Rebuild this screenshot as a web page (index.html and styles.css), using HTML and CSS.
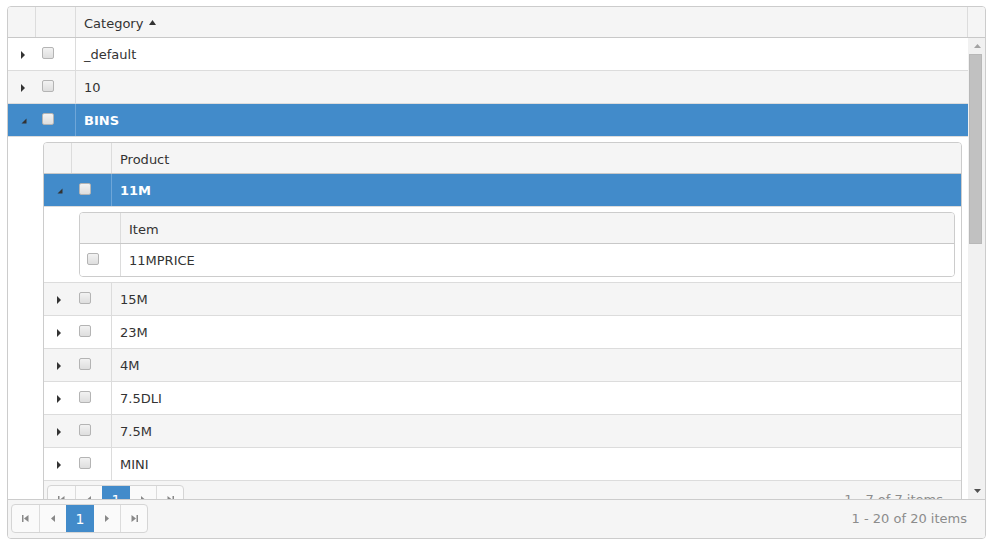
FILE: index.html
```html
<!DOCTYPE html>
<html>
<head>
<meta charset="utf-8">
<link rel="stylesheet" href="styles.css">
</head>
<body>
<div class="grid">
  <div class="ghead">
    <div class="hh"></div>
    <div class="hcb"></div>
    <div class="ht bordered">Category <svg class="sort" width="7" height="5" viewBox="0 0 7 5"><path d="M0 5L3.5 0L7 5Z" fill="#333"/></svg></div>
    <div class="sbh"></div>
  </div>
  <div class="gbody">
    <div class="rows">
      <div class="row">
        <div class="hc"><svg width="5" height="8" viewBox="0 0 5 8"><path d="M0 0L4 4L0 8Z" fill="#333"/></svg></div>
        <div class="cc"><span class="cb"></span></div>
        <div class="tc">_default</div>
      </div>
      <div class="row alt">
        <div class="hc"><svg width="5" height="8" viewBox="0 0 5 8"><path d="M0 0L4 4L0 8Z" fill="#333"/></svg></div>
        <div class="cc"><span class="cb"></span></div>
        <div class="tc">10</div>
      </div>
      <div class="row sel">
        <div class="hc"><svg width="6" height="6" viewBox="0 0 6 6"><path d="M5.5 0.5V5.5H0.5Z" fill="#333"/></svg></div>
        <div class="cc"><span class="cb"></span></div>
        <div class="tc">BINS</div>
      </div>
      <div class="detail">
        <div class="dh"></div>
        <div class="dc">
          <div class="sub">
            <div class="ghead">
              <div class="hh"></div>
              <div class="hcb"></div>
              <div class="ht">Product</div>
            </div>
            <div class="row sel">
              <div class="hc"><svg width="6" height="6" viewBox="0 0 6 6"><path d="M5.5 0.5V5.5H0.5Z" fill="#333"/></svg></div>
              <div class="cc n"><span class="cb"></span></div>
              <div class="tc">11M</div>
            </div>
            <div class="detail">
              <div class="dh"></div>
              <div class="dc">
                <div class="sub">
                  <div class="ghead">
                    <div class="hcb wide"></div>
                    <div class="ht">Item</div>
                  </div>
                  <div class="row last">
                    <div class="cc n wide"><span class="cb"></span></div>
                    <div class="tc">11MPRICE</div>
                  </div>
                </div>
              </div>
            </div>
            <div class="row alt">
              <div class="hc"><svg width="5" height="8" viewBox="0 0 5 8"><path d="M0 0L4 4L0 8Z" fill="#333"/></svg></div>
              <div class="cc n"><span class="cb"></span></div>
              <div class="tc">15M</div>
            </div>
            <div class="row">
              <div class="hc"><svg width="5" height="8" viewBox="0 0 5 8"><path d="M0 0L4 4L0 8Z" fill="#333"/></svg></div>
              <div class="cc n"><span class="cb"></span></div>
              <div class="tc">23M</div>
            </div>
            <div class="row alt">
              <div class="hc"><svg width="5" height="8" viewBox="0 0 5 8"><path d="M0 0L4 4L0 8Z" fill="#333"/></svg></div>
              <div class="cc n"><span class="cb"></span></div>
              <div class="tc">4M</div>
            </div>
            <div class="row">
              <div class="hc"><svg width="5" height="8" viewBox="0 0 5 8"><path d="M0 0L4 4L0 8Z" fill="#333"/></svg></div>
              <div class="cc n"><span class="cb"></span></div>
              <div class="tc">7.5DLI</div>
            </div>
            <div class="row alt">
              <div class="hc"><svg width="5" height="8" viewBox="0 0 5 8"><path d="M0 0L4 4L0 8Z" fill="#333"/></svg></div>
              <div class="cc n"><span class="cb"></span></div>
              <div class="tc">7.5M</div>
            </div>
            <div class="row">
              <div class="hc"><svg width="5" height="8" viewBox="0 0 5 8"><path d="M0 0L4 4L0 8Z" fill="#333"/></svg></div>
              <div class="cc n"><span class="cb"></span></div>
              <div class="tc">MINI</div>
            </div>
            <div class="pager">
              <div class="pbtns">
                <span class="pb"><svg width="7" height="7" viewBox="0 0 7 7"><rect x="0" y="0" width="1.5" height="7" fill="#888"/><path d="M6.5 0V7L2 3.5Z" fill="#888"/></svg></span>
                <span class="pb"><svg width="4" height="7" viewBox="0 0 4 7"><path d="M4 0V7L0 3.5Z" fill="#888"/></svg></span>
                <span class="pb cur">1</span>
                <span class="pb"><svg width="4" height="7" viewBox="0 0 4 7"><path d="M0 0V7L4 3.5Z" fill="#888"/></svg></span>
                <span class="pb"><svg width="7" height="7" viewBox="0 0 7 7"><path d="M0.5 0V7L5 3.5Z" fill="#888"/><rect x="5.5" y="0" width="1.5" height="7" fill="#888"/></svg></span>
              </div>
              <div class="pinfo">1 - 7 of 7 items</div>
            </div>
          </div>
        </div>
      </div>
    </div>
    <div class="sb">
      <div class="sbarrow"><svg width="7" height="4" viewBox="0 0 7 4"><path d="M0 4L3.5 0L7 4Z" fill="#a3a3a3"/></svg></div>
      <div class="thumb"></div>
      <div class="sbspace"></div>
      <div class="sbarrow"><svg width="7" height="4" viewBox="0 0 7 4"><path d="M0 0L3.5 4L7 0Z" fill="#505050"/></svg></div>
    </div>
  </div>
  <div class="pager outer">
    <div class="pbtns">
      <span class="pb"><svg width="7" height="7" viewBox="0 0 7 7"><rect x="0" y="0" width="1.5" height="7" fill="#888"/><path d="M6.5 0V7L2 3.5Z" fill="#888"/></svg></span>
      <span class="pb"><svg width="4" height="7" viewBox="0 0 4 7"><path d="M4 0V7L0 3.5Z" fill="#888"/></svg></span>
      <span class="pb cur">1</span>
      <span class="pb"><svg width="4" height="7" viewBox="0 0 4 7"><path d="M0 0V7L4 3.5Z" fill="#888"/></svg></span>
      <span class="pb"><svg width="7" height="7" viewBox="0 0 7 7"><path d="M0.5 0V7L5 3.5Z" fill="#888"/><rect x="5.5" y="0" width="1.5" height="7" fill="#888"/></svg></span>
    </div>
    <div class="pinfo">1 - 20 of 20 items</div>
  </div>
</div>
</body>
</html>
```

FILE: styles.css
```css
* { box-sizing: border-box; }
body {
  margin: 0;
  font-family: "DejaVu Sans", "Open Sans", sans-serif;
  font-size: 13px;
  color: #333;
  background: #fff;
}
.grid {
  margin: 6px 0 0 7px;
  width: 979px;
  height: 533px;
  border: 1px solid #ccc;
  border-radius: 4px;
  display: flex;
  flex-direction: column;
  overflow: hidden;
}
.ghead {
  display: flex;
  flex: none;
  height: 31px;
  background: #f5f5f5;
  border-bottom: 1px solid #c8c8c8;
}
.ghead .hh { width: 28px; flex: none; border-right: 1px solid #dcdcdc; }
.ghead .hcb { width: 40px; flex: none; border-right: 1px solid #dcdcdc; }
.ghead .hcb.wide { width: 41px; }
.ghead .ht {
  flex: 1;
  display: flex;
  align-items: center;
  padding: 3px 0 0 8px;
}
.ghead .ht.bordered { border-right: 1px solid #dcdcdc; }
.ghead .sbh { width: 17px; flex: none; }
.sort { margin-left: 6px; margin-top: -2px; }

.gbody { display: flex; flex: 1; min-height: 0; }
.rows { flex: 1; overflow: hidden; }

.row {
  display: flex;
  height: 33px;
  border-bottom: 1px solid #dcdcdc;
  background: #fff;
}
.row.alt { background: #f5f5f5; }
.row.last { border-bottom: 0; height: 32px; }
.row.sel { background: #428bca; color: #fff; font-weight: bold; }
.row .hc {
  width: 28px;
  flex: none;
  display: flex;
  align-items: center;
  padding: 1px 0 0 13px;
}
.row .cc {
  width: 40px;
  flex: none;
  padding: 9px 0 0 6px;
  border-right: 1px solid #dcdcdc;
}
.row .cc.n { padding-left: 7px; }
.row .cc.wide { width: 41px; }
.row.sel .cc { border-right-color: #6ea6d8; }
.row .tc {
  flex: 1;
  display: flex;
  align-items: center;
  padding-left: 8px;
}
.cb {
  display: block;
  width: 12px;
  height: 12px;
  border: 1px solid #b4b4b4;
  border-radius: 2px;
  background: linear-gradient(#f2f2f2, #dedede);
}

.detail {
  display: flex;
  border-bottom: 1px solid #dcdcdc;
  background: #fff;
}
.detail .dh { width: 28px; flex: none; }
.detail .dc { flex: 1; padding: 5px 6px 5px 7px; }
.sub {
  border: 1px solid #ccc;
  border-radius: 4px;
  overflow: hidden;
  display: flex;
  flex-direction: column;
}

.sb {
  width: 17px;
  flex: none;
  background: #f1f1f1;
  display: flex;
  flex-direction: column;
}
.sbarrow {
  height: 16px;
  display: flex;
  align-items: center;
  justify-content: center;
  padding-left: 1px;
}
.thumb {
  height: 190px;
  width: 13px;
  margin-left: 1px;
  background: #c1c1c1;
  border: 1px solid #b8b8b8;
}
.sbspace { flex: 1; }

.pager {
  display: flex;
  align-items: flex-start;
  justify-content: space-between;
  height: 38px;
  flex: none;
  background: #f5f5f5;
  padding: 4px 18px 0 3px;
}
.pager.outer { height: 39px; border-top: 1px solid #ccc; }
.pbtns {
  display: flex;
  border: 1px solid #d5d5d5;
  border-radius: 4px;
  overflow: hidden;
  background: #fafafa;
  height: 29px;
}
.pb {
  width: 27px;
  height: 27px;
  display: flex;
  align-items: center;
  justify-content: center;
  border-left: 1px solid #dcdcdc;
  color: #888;
}
.pb:first-child { border-left: 0; width: 27px; }
.pb.cur { background: #428bca; color: #fff; border-left-color: #428bca; font-size: 14px; }
.pb.cur + .pb { border-left-color: #428bca; }
.pinfo {
  color: #8c8c8c;
  line-height: 29px;
}
```
